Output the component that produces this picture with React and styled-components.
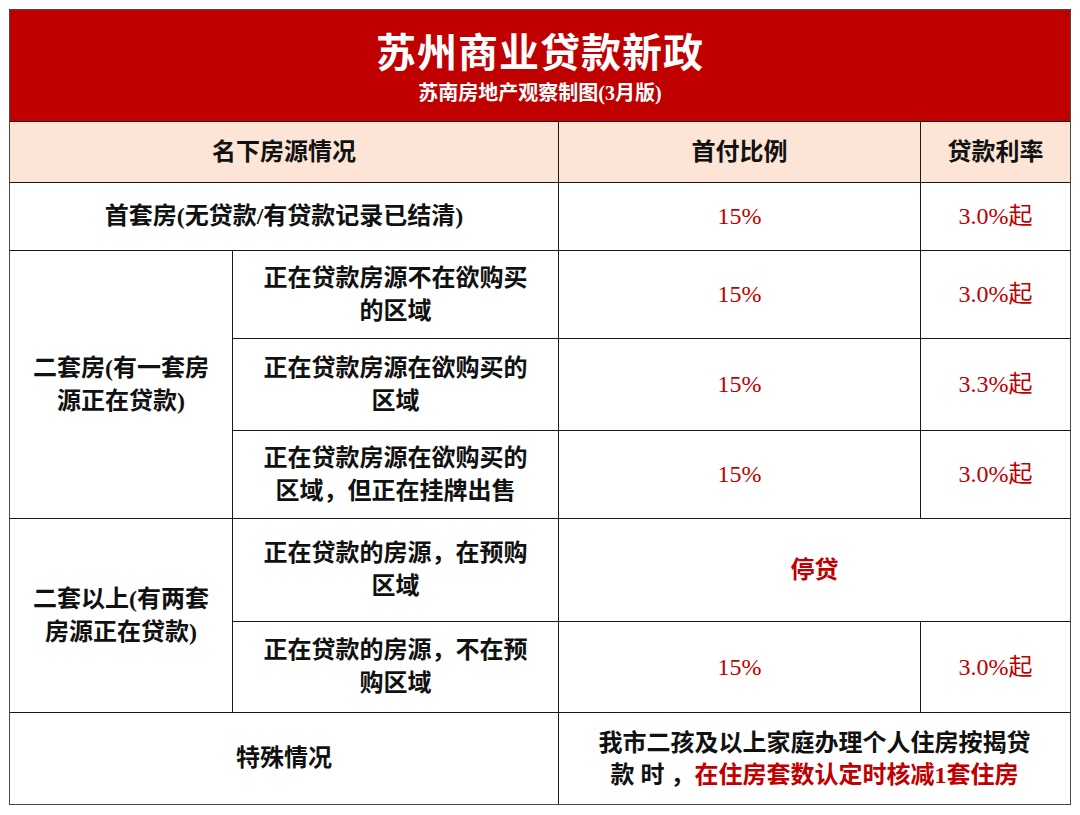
import React from 'react'
import styled, { createGlobalStyle } from 'styled-components'

const GlobalStyle = createGlobalStyle`
  html, body {
    margin: 0;
    padding: 0;
    background: #ffffff;
  }
  body {
    font-family: "Liberation Serif", "Noto Sans CJK SC", serif;
  }
`

const Page = styled.div`
  padding: 9px;
  width: 1062px;
`

const Table = styled.div`
  display: grid;
  grid-template-columns: 222px 325px 361px 149px;
  grid-template-rows: 111px 60px 67px 87px 91px 87px 102px 90px 91px;
  gap: 1px;
  background: #1a1a1a;
  border: 1px solid #4a4a4a;
`

const TitleCell = styled.div`
  grid-column: 1 / 5;
  background: #c00000;
  color: #ffffff;
  display: flex;
  flex-direction: column;
  align-items: center;
  justify-content: center;
  gap: 3px;
  padding-top: 4px;
`

const Title = styled.h1`
  margin: 0;
  font-size: 40px;
  line-height: 48px;
  font-weight: 700;
  letter-spacing: 1px;
`

const Subtitle = styled.div`
  font-size: 20px;
  line-height: 24px;
  font-weight: 700;
`

const Cell = styled.div`
  grid-column: ${p => p.$col || 'auto'};
  grid-row: ${p => p.$row || 'auto'};
  background: ${p => (p.$head ? '#fce4d6' : '#ffffff')};
  color: ${p => (p.$red ? '#c00000' : '#111111')};
  font-size: 24px;
  line-height: 33px;
  font-weight: ${p => (p.$light ? 400 : 700)};
  display: flex;
  align-items: center;
  justify-content: center;
  text-align: center;
  padding: 0 ${p => p.$pad || 0}px;
  box-sizing: border-box;
`

const Note = styled.div`
  line-height: 32px;
`

const Red = styled.span`
  color: #c00000;
`

const Rate = ({ children }) => (
  <Cell $red $light>{children}</Cell>
)

export default function App() {
  return (
    <Page>
      <GlobalStyle />
      <Table>
        <TitleCell>
          <Title>苏州商业贷款新政</Title>
          <Subtitle>苏南房地产观察制图(3月版)</Subtitle>
        </TitleCell>

        <Cell $head $col="1 / 3">名下房源情况</Cell>
        <Cell $head>首付比例</Cell>
        <Cell $head>贷款利率</Cell>

        <Cell $col="1 / 3">首套房(无贷款/有贷款记录已结清)</Cell>
        <Rate>15%</Rate>
        <Rate>3.0%起</Rate>

        <Cell $row="span 3" $pad={22}>二套房(有一套房源正在贷款)</Cell>
        <Cell $pad={28}>正在贷款房源不在欲购买的区域</Cell>
        <Rate>15%</Rate>
        <Rate>3.0%起</Rate>
        <Cell $pad={28}>正在贷款房源在欲购买的区域</Cell>
        <Rate>15%</Rate>
        <Rate>3.3%起</Rate>
        <Cell $pad={28}>正在贷款房源在欲购买的区域，但正在挂牌出售</Cell>
        <Rate>15%</Rate>
        <Rate>3.0%起</Rate>

        <Cell $row="span 2" $pad={22}>二套以上(有两套房源正在贷款)</Cell>
        <Cell $pad={28}>正在贷款的房源，在预购区域</Cell>
        <Cell $col="3 / 5" $red>停贷</Cell>
        <Cell $pad={28}>正在贷款的房源，不在预购区域</Cell>
        <Rate>15%</Rate>
        <Rate>3.0%起</Rate>

        <Cell $col="1 / 3">特殊情况</Cell>
        <Cell $col="3 / 5">
          <Note>
            我市二孩及以上家庭办理个人住房按揭贷
            <br />
            款 时 ，<Red>在住房套数认定时核减1套住房</Red>
          </Note>
        </Cell>
      </Table>
    </Page>
  )
}
